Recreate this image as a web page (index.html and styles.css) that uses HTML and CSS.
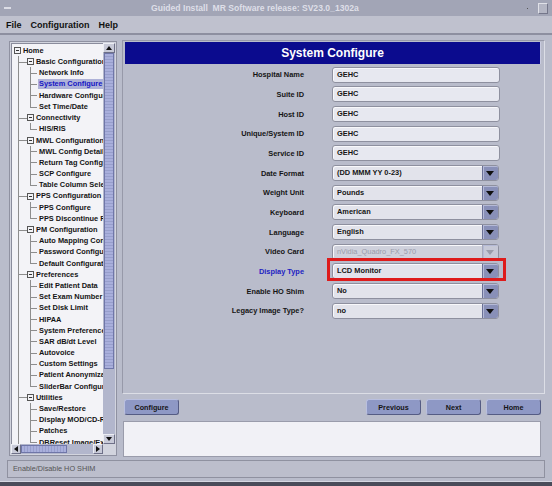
FILE: index.html
```html
<!DOCTYPE html>
<html lang="en">
  <head>
    <meta charset="UTF-8" />
    <title>Guided Install</title>
    <link rel="stylesheet" href="styles.css">
  </head>
  <body>
    <div class="window">
      <div class="titlebar">
        <span class="tb-icon"></span>
        <span class="tb-title">Guided Install&nbsp; MR Software release: SV23.0_1302a</span>
        <span class="tb-dot"></span>
        <span class="tb-btn"></span>
      </div>
      <div class="menubar">
        <span>File</span>
        <span>Configuration</span>
        <span>Help</span>
      </div>

      <div class="main">
        <div class="nav">
          <div class="nav-top">
            <div class="tree-view">
              <ul class="tree">
                <li>
                  <div class="row"><span class="exp"></span>Home</div>
                  <ul class="l1">
                    <li>
                      <div class="row"><span class="exp"></span>Basic Configuration</div>
                      <ul class="l2">
                        <li><div class="row">Network Info</div></li>
                        <li><div class="row"><span class="sel">System Configure</span></div></li>
                        <li><div class="row">Hardware Configuration</div></li>
                        <li><div class="row">Set Time/Date</div></li>
                      </ul>
                    </li>
                    <li>
                      <div class="row"><span class="exp"></span>Connectivity</div>
                      <ul class="l2">
                        <li><div class="row">HIS/RIS</div></li>
                      </ul>
                    </li>
                    <li>
                      <div class="row"><span class="exp"></span>MWL Configuration</div>
                      <ul class="l2">
                        <li><div class="row">MWL Config Details</div></li>
                        <li><div class="row">Return Tag Configure</div></li>
                        <li><div class="row">SCP Configure</div></li>
                        <li><div class="row">Table Column Selection</div></li>
                      </ul>
                    </li>
                    <li>
                      <div class="row"><span class="exp"></span>PPS Configuration</div>
                      <ul class="l2">
                        <li><div class="row">PPS Configure</div></li>
                        <li><div class="row">PPS Discontinue Reasons</div></li>
                      </ul>
                    </li>
                    <li>
                      <div class="row"><span class="exp"></span>PM Configuration</div>
                      <ul class="l2">
                        <li><div class="row">Auto Mapping Configuration</div></li>
                        <li><div class="row">Password Configuration</div></li>
                        <li><div class="row">Default Configuration</div></li>
                      </ul>
                    </li>
                    <li>
                      <div class="row"><span class="exp"></span>Preferences</div>
                      <ul class="l2">
                        <li><div class="row">Edit Patient Data</div></li>
                        <li><div class="row">Set Exam Number</div></li>
                        <li><div class="row">Set Disk Limit</div></li>
                        <li><div class="row">HIPAA</div></li>
                        <li><div class="row">System Preferences</div></li>
                        <li><div class="row">SAR dB/dt Level</div></li>
                        <li><div class="row">Autovoice</div></li>
                        <li><div class="row">Custom Settings</div></li>
                        <li><div class="row">Patient Anonymization</div></li>
                        <li><div class="row">SliderBar Configuration</div></li>
                      </ul>
                    </li>
                    <li>
                      <div class="row"><span class="exp"></span>Utilities</div>
                      <ul class="l2">
                        <li><div class="row">Save/Restore</div></li>
                        <li><div class="row">Display MOD/CD-ROM</div></li>
                        <li><div class="row">Patches</div></li>
                        <li><div class="row">DBReset Image/Exam</div></li>
                      </ul>
                    </li>
                  </ul>
                </li>
              </ul>
            </div>
            <div class="vscroll">
              <div class="sb-btn up"></div>
              <div class="vthumb"></div>
              <div class="vtrack"></div>
              <div class="sb-btn down"></div>
            </div>
          </div>
          <div class="hscroll">
            <div class="sb-btn left"></div>
            <div class="hthumb"></div>
            <div class="htrack"></div>
            <div class="sb-btn right"></div>
            <div class="corner"></div>
          </div>
        </div>

        <div class="content">
          <div class="form-panel">
            <div class="header">System Configure</div>
            <div class="form">
              <label>Hospital Name</label>
              <div class="field">GEHC</div>
              <label>Suite ID</label>
              <div class="field">GEHC</div>
              <label>Host ID</label>
              <div class="field">GEHC</div>
              <label>Unique/System ID</label>
              <div class="field">GEHC</div>
              <label>Service ID</label>
              <div class="field">GEHC</div>
              <label>Date Format</label>
              <div class="select"><span>(DD MMM YY 0-23)</span><span class="drop"></span></div>
              <label>Weight Unit</label>
              <div class="select"><span>Pounds</span><span class="drop"></span></div>
              <label>Keyboard</label>
              <div class="select"><span>American</span><span class="drop"></span></div>
              <label>Language</label>
              <div class="select"><span>English</span><span class="drop"></span></div>
              <label>Video Card</label>
              <div class="select disabled"><span>nVidia_Quadro_FX_570</span><span class="drop"></span></div>
              <label class="active">Display Type</label>
              <div class="select marked"><span>LCD Monitor</span><span class="drop"></span></div>
              <label>Enable HO Shim</label>
              <div class="select"><span>No</span><span class="drop"></span></div>
              <label>Legacy Image Type?</label>
              <div class="select"><span>no</span><span class="drop"></span></div>
            </div>
          </div>

          <div class="buttons">
            <button class="btn">Configure</button>
            <button class="btn push">Previous</button>
            <button class="btn">Next</button>
            <button class="btn">Home</button>
          </div>

          <div class="message"></div>
        </div>
      </div>

      <div class="status">Enable/Disable HO SHIM</div>
    </div>
  </body>
</html>
```

FILE: styles.css
```css
body {
  margin: 0;
  background: #4a4c5a;
  font-family: "Liberation Sans", Arial, sans-serif;
  font-weight: bold;
}
.window {
  width: 552px;
  height: 482px;
  background: #b9bccb;
  display: flex;
  flex-direction: column;
  border-bottom: 1px solid #d6d8e2;
  box-sizing: border-box;
}

/* title bar + menu */
.titlebar {
  height: 16px;
  flex: 0 0 16px;
  background: #a2a5b6;
  color: #dedfe8;
  font-size: 8.6px;
  display: flex;
  align-items: center;
}
.tb-icon {
  width: 7px;
  height: 2px;
  margin-left: 4px;
  background: #dcdde6;
}
.tb-title {
  margin-left: 140px;
  white-space: pre;
}
.tb-dot {
  width: 1px;
  height: 1px;
  background: #555;
  margin-left: auto;
}
.tb-btn {
  width: 8px;
  height: 9px;
  margin: 0 4px 0 10px;
  background: #b4b6c4;
  border: 1px solid;
  border-color: #e0e1e8 #74768a #74768a #e0e1e8;
}
.menubar {
  height: 17px;
  flex: 0 0 17px;
  background: #bfc1ce;
  border-bottom: 2px solid #8d8fa0;
  display: flex;
  align-items: center;
  gap: 9px;
  padding-left: 6px;
  font-size: 9px;
  color: #111;
}

.main {
  flex: 0 0 423px;
  display: flex;
  gap: 5px;
  padding: 5px 7px 0 9px;
  box-sizing: border-box;
}

/* navigation tree */
.nav {
  width: 108px;
  height: 415px;
  margin-top: 1px;
  border: 1px solid #8f91a1;
  padding: 1px;
  background: #d2d4de;
  box-sizing: border-box;
  display: flex;
  flex-direction: column;
}
.nav-top {
  display: flex;
  height: 401px;
}
.tree-view {
  width: 92px;
  background: #f3f3f7;
  border-left: 1px solid #8a8c9c;
  border-top: 1px solid #8a8c9c;
  overflow: hidden;
  box-sizing: border-box;
  padding-top: 1px;
}
.tree,
.tree ul {
  list-style: none;
  margin: 0;
}
.tree {
  padding-left: 2px;
}
.tree li {
  position: relative;
}
.row {
  height: 11.2px;
  line-height: 11.2px;
  font-size: 7.4px;
  color: #141414;
  white-space: nowrap;
  display: flex;
  align-items: center;
}
.exp {
  width: 7px;
  height: 7px;
  border: 1px solid #555;
  box-sizing: border-box;
  margin-right: 2px;
  flex: none;
  position: relative;
  background: #f3f3f7;
}
.exp::after {
  content: "";
  position: absolute;
  left: 1px;
  right: 1px;
  top: 2px;
  height: 1px;
  background: #333;
}
.l1 {
  padding-left: 13px;
}
.l2 {
  padding-left: 10px;
}
.l2 .row {
  padding-left: 2px;
}
.l1 > li::before,
.l2 > li::before {
  content: "";
  position: absolute;
  top: 0;
  bottom: 0;
  width: 1px;
  background: #8d8d8d;
}
.l1 > li::after,
.l2 > li::after {
  content: "";
  position: absolute;
  top: 5.6px;
  height: 1px;
  background: #8d8d8d;
}
.l1 > li::before {
  left: -9px;
}
.l1 > li::after {
  left: -9px;
  width: 9px;
}
.l2 > li::before {
  left: -7px;
}
.l2 > li::after {
  left: -7px;
  width: 7px;
}
.l2 > li:last-child::before {
  bottom: auto;
  height: 6px;
}
.sel {
  color: #1616c4;
  background: #aeb2d8;
  padding: 0 2px 0 1px;
  margin-left: -1px;
  line-height: 10px;
  flex: 1;
}

/* scrollbars */
.vscroll {
  width: 12px;
  display: flex;
  flex-direction: column;
  background: #b2b6cc;
}
.sb-btn {
  flex: 0 0 10px;
  height: 10px;
  background: #c8cad8;
  border: 1px solid;
  border-color: #eceef4 #6e7088 #6e7088 #eceef4;
  box-sizing: border-box;
  position: relative;
}
.sb-btn::after {
  content: "";
  position: absolute;
  left: 50%;
  top: 50%;
  border: 3px solid transparent;
  transform: translate(-50%, -50%);
}
.up::after {
  border-bottom: 4px solid #111;
  border-top-width: 0;
}
.down::after {
  border-top: 4px solid #111;
  border-bottom-width: 0;
}
.left::after {
  border-right: 4px solid #111;
  border-left-width: 0;
}
.right::after {
  border-left: 4px solid #111;
  border-right-width: 0;
}
.vthumb {
  height: 314px;
  margin: 0 1px;
  border: 1px solid #6f76a8;
  background: repeating-linear-gradient(#a9afdc 0 2px, #979ecb 2px 3px);
}
.vtrack {
  flex: 1;
}
.hscroll {
  height: 10px;
  display: flex;
  background: #b2b6cc;
}
.hthumb {
  width: 44px;
  margin: 1px 0;
  border: 1px solid #6f76a8;
  background: repeating-linear-gradient(90deg, #a9afdc 0 2px, #979ecb 2px 3px);
}
.htrack {
  flex: 1;
}
.corner {
  width: 12px;
  background: #d2d4de;
}

/* main panel */
.content {
  width: 423px;
  display: flex;
  flex-direction: column;
}
.form-panel {
  height: 354px;
  border: 1px solid;
  border-color: #9799a9 #dcdee6 #dcdee6 #9799a9;
  box-sizing: border-box;
}
.header {
  margin: 1px 3px 0 2px;
  height: 22px;
  line-height: 22px;
  background: #0b0b8e;
  color: #fff;
  font-size: 12px;
  text-align: center;
  border-right: 1px solid #c9cbe0;
}
.form {
  display: grid;
  grid-template-columns: 179px 168px;
  grid-auto-rows: 19.67px;
  column-gap: 28px;
  align-items: center;
  margin-left: 2px;
  padding-top: 1px;
  font-size: 7.4px;
}
.form label {
  text-align: right;
  color: #151515;
}
.form label.active {
  color: #2222c2;
}
.field,
.select {
  height: 16px;
  border: 1px solid #8e909f;
  border-radius: 3px;
  background: #e7e8f0;
  box-sizing: border-box;
  box-shadow: inset 1px 1px 0 #f8f8fb;
  color: #151515;
  line-height: 14px;
  padding-left: 4px;
}
.select {
  width: 167px;
  display: flex;
  align-items: center;
  background: #e2e3eb;
}
.select span:first-child {
  flex: 1;
}
.drop {
  width: 15px;
  height: 14px;
  background: #8990b8;
  border-left: 1px solid #6a7096;
  box-shadow: inset 1px 1px 0 #b5bad6;
  border-radius: 0 2px 2px 0;
  position: relative;
}
.drop::after {
  content: "";
  position: absolute;
  left: 3px;
  top: 5px;
  border: 4.5px solid transparent;
  border-top: 5px solid #111;
  border-bottom-width: 0;
}
.disabled {
  color: #9a9cab;
  font-weight: normal;
  background: #cfd1dc;
}
.disabled .drop {
  background: #c6c8d6;
  border-left-color: #a6a8b8;
}
.disabled .drop::after {
  border-top-color: #9a9cab;
}
.marked {
  position: relative;
  overflow: visible;
}
.marked::after {
  content: "";
  position: absolute;
  left: -6px;
  right: -8px;
  top: -6px;
  bottom: -3px;
  border: 3px solid #de1b1b;
}

/* buttons + message */
.buttons {
  display: flex;
  gap: 5px;
  margin: 5px 4px 0 2px;
}
.btn {
  width: 55px;
  height: 16px;
  padding: 0;
  font-family: inherit;
  font-weight: bold;
  font-size: 7.2px;
  color: #151515;
  background: #8e98c5;
  border: 1px solid;
  border-color: #b9bfdf #555c84 #555c84 #b9bfdf;
  border-radius: 3px;
}
.push {
  margin-left: auto;
}
.message {
  height: 36px;
  margin: 6px 4px 0 1px;
  background: #f1f1f6;
  border: 1px solid #9a9cab;
  box-sizing: border-box;
}

.status {
  height: 18px;
  margin: 2px 7px 0 7px;
  border: 1px solid #8f91a0;
  box-sizing: border-box;
  background: #bcbecc;
  color: #555;
  font-weight: normal;
  font-size: 7.3px;
  line-height: 16px;
  padding-left: 5px;
}
```
